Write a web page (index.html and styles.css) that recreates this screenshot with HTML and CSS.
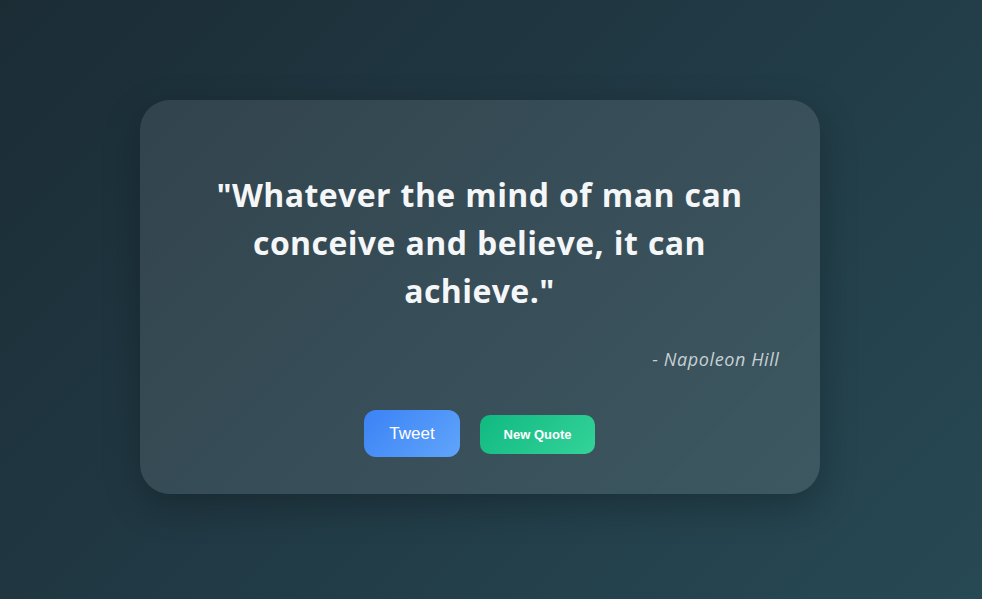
FILE: index.html
```html
<!DOCTYPE html>
<html lang="en">
<head>
<meta charset="utf-8">
<title>Quote Generator</title>
<link rel="stylesheet" href="styles.css">
</head>
<body>
<main class="page">
  <section class="card">
    <blockquote class="quote">"Whatever the mind of man can conceive and believe, it can achieve."</blockquote>
    <p class="author">- Napoleon Hill</p>
    <div class="actions">
      <button class="btn btn-tweet">Tweet</button>
      <button class="btn btn-new">New Quote</button>
    </div>
  </section>
</main>
</body>
</html>
```
FILE: styles.css
```css
* { box-sizing: border-box; }
html, body { margin: 0; height: 100%; }
body {
  background: linear-gradient(135deg, #1b2c35 0%, #213a45 50%, #274954 100%);
  font-family: "Open Sans", "Noto Sans", sans-serif;
}
.page {
  height: 100%;
  display: flex;
  align-items: center;
  justify-content: center;
  padding-right: 23px;
}
.card {
  width: 680px;
  height: 394px;
  margin-top: -5px;
  border-radius: 30px;
  padding: 71px 40px 36px;
  background: linear-gradient(135deg, rgba(255,255,255,0.095), rgba(255,255,255,0.11));
  box-shadow: 0 12px 36px rgba(0,0,0,0.25);
  display: flex;
  flex-direction: column;
}
.quote {
  margin: 0 auto;
  width: 580px;
  text-align: center;
  color: #f4f6f7;
  font-weight: 700;
  font-size: 32px;
  line-height: 48px;
  letter-spacing: 0.4px;
  word-spacing: 1px;
}
.author {
  margin: 31px 0 0;
  text-align: right;
  color: #c9d0d4;
  font-style: italic;
  font-size: 18px;
  line-height: 27px;
  letter-spacing: 0.6px;
}
.actions {
  margin-top: auto;
  display: flex;
  justify-content: center;
  align-items: center;
  gap: 20px;
}
.btn {
  border: none;
  color: #fff;
  font-family: "Liberation Sans", Arial, sans-serif;
  cursor: pointer;
}
.btn-tweet {
  width: 96px;
  height: 47px;
  border-radius: 12px;
  font-size: 17px;
  background: linear-gradient(135deg, #3b82f6, #60a5fa);
  margin-bottom: 1px;
}
.btn-new {
  width: 115px;
  height: 39px;
  border-radius: 10px;
  font-size: 13px;
  font-weight: 700;
  background: linear-gradient(135deg, #10b981, #34d399);
}
```
